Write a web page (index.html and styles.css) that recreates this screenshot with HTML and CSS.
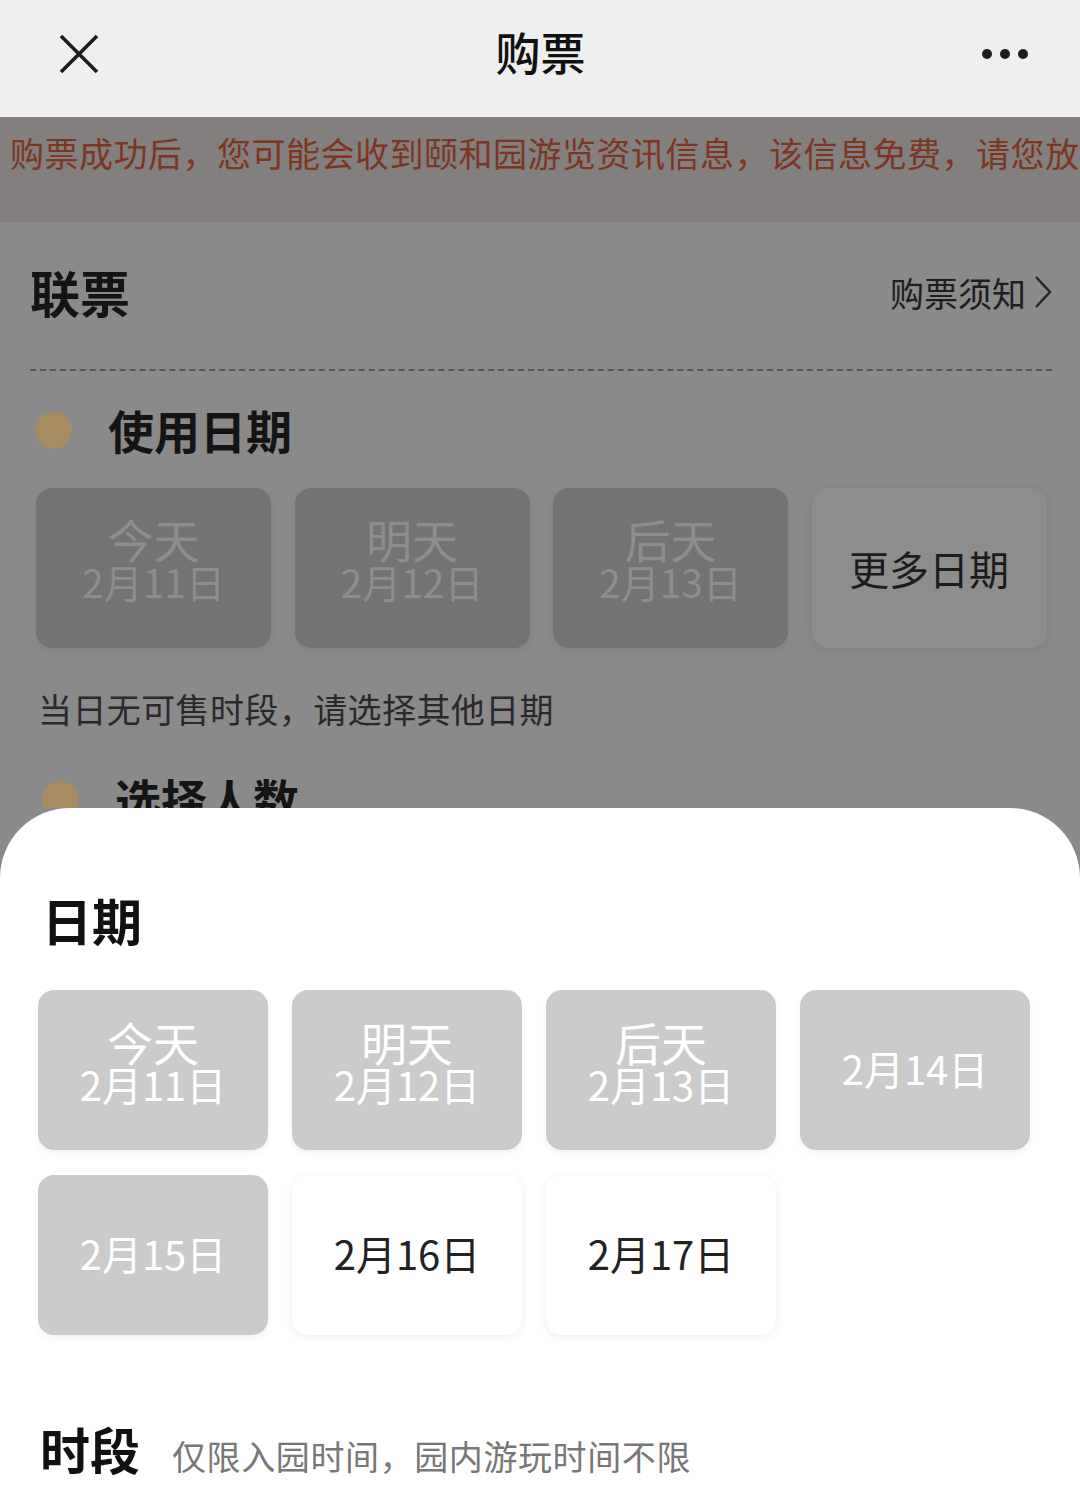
FILE: index.html
```html
<!DOCTYPE html>
<html lang="zh-CN">
<head>
    <meta charset="UTF-8">
    <meta name="viewport" content="width=device-width, initial-scale=1.0">
    <title>购票</title>
    <link rel="stylesheet" href="styles.css">
</head>
<body>

<!-- barra superior -->
<div class="navbar">
    <svg class="close" width="40" height="40" viewBox="0 0 40 40">
        <path d="M2 2 L38 38 M38 2 L2 38" stroke="#1c1c1c" stroke-width="3.6" fill="none"/>
    </svg>
    <div class="nav-title">购票</div>
    <div class="more"><i></i><i></i><i></i></div>
</div>

<!-- pagina escurecida atras do painel -->
<div class="page">
    <div class="notice">购票成功后，您可能会收到颐和园游览资讯信息，该信息免费，请您放心查收。</div>

    <div class="card">
        <div class="card-head">
            <h1>联票</h1>
            <a class="rules">购票须知
                <svg width="18" height="34" viewBox="0 0 18 34">
                    <path d="M2 2 L16 17 L2 32" stroke="#262626" stroke-width="2.4" fill="none"/>
                </svg>
            </a>
        </div>
        <div class="dashed"></div>

        <div class="section-title"><span class="dot"></span>使用日期</div>
        <div class="date-row">
            <div class="day off"><span class="big">今天</span><span>2月11日</span></div>
            <div class="day off"><span class="big">明天</span><span>2月12日</span></div>
            <div class="day off"><span class="big">后天</span><span>2月13日</span></div>
            <div class="day more-days">更多日期</div>
        </div>
        <p class="hint">当日无可售时段，请选择其他日期</p>

        <div class="section-title second"><span class="dot"></span>选择人数</div>
    </div>
</div>

<!-- painel de datas -->
<div class="sheet">
    <h2 class="sheet-title">日期</h2>
    <div class="date-grid">
        <div class="date off"><span class="big">今天</span><span>2月11日</span></div>
        <div class="date off"><span class="big">明天</span><span>2月12日</span></div>
        <div class="date off"><span class="big">后天</span><span>2月13日</span></div>
        <div class="date off"><span>2月14日</span></div>
        <div class="date off"><span>2月15日</span></div>
        <div class="date"><span>2月16日</span></div>
        <div class="date"><span>2月17日</span></div>
    </div>

    <div class="period">
        <h2 class="sheet-title">时段</h2>
        <span class="period-sub">仅限入园时间，园内游玩时间不限</span>
    </div>
</div>

</body>
</html>
```

FILE: styles.css
```css
body{
    margin: 0;
    padding: 0;
    width: 1080px;
    height: 1509px;
    overflow: hidden;
    background: #8a8a8a;
    font-family: "Noto Sans CJK SC", "Noto Sans", sans-serif;
}

/* barra superior */
.navbar{
    height: 117px;
    background: #efefef;
    display: grid;
    grid-template-columns: 1fr auto 1fr;
    align-items: center;
    padding: 0 52px 10px 59px;
    box-sizing: border-box;
}
.close{
    display: block;
}
.nav-title{
    font-size: 45px;
    font-weight: 500;
    color: #111;
    line-height: 60px;
    margin: 0 6px 4px 0;
}
.more{
    display: flex;
    gap: 8px;
    justify-self: end;
}
.more i{
    width: 10px;
    height: 10px;
    border-radius: 50%;
    background: #1c1c1c;
}

/* pagina escurecida */
.page{
    height: 691px;
    overflow: hidden;
}
.notice{
    height: 105px;
    box-sizing: border-box;
    padding: 11px 0 0 10px;
    background: #827f7e;
    color: #7e3622;
    font-size: 34px;
    line-height: 50px;
    letter-spacing: 0.5px;
    white-space: nowrap;
    overflow: hidden;
}
.card{
    padding: 0 28px 0 30px;
}
.card-head{
    display: flex;
    justify-content: space-between;
    align-items: center;
    padding-top: 34px;
    height: 70px;
}
.card-head h1{
    margin: 0;
    font-size: 50px;
    font-weight: 700;
    color: #141414;
    line-height: 70px;
}
.rules{
    display: flex;
    align-items: center;
    gap: 8px;
    font-size: 34px;
    color: #1e1e1e;
    margin-top: 2px;
}
.dashed{
    margin-top: 43px;
    height: 0;
    border-top: 2px dashed #5e5648;
}
.section-title{
    display: flex;
    align-items: center;
    margin-top: 28px;
    height: 60px;
    font-size: 46px;
    font-weight: 700;
    color: #141414;
}
.dot{
    width: 37px;
    height: 37px;
    border-radius: 50%;
    background: #a88b60;
    margin: 3px 36px 0 5px;
}
.section-title.second{
    margin-top: 34px;
    padding-left: 7px;
}

.date-row{
    display: grid;
    grid-template-columns: repeat(4, 235px);
    column-gap: 23.5px;
    margin: 29px 0 0 6px;
}
.day{
    height: 160px;
    border-radius: 16px;
    display: flex;
    flex-direction: column;
    align-items: center;
    justify-content: center;
    font-size: 39px;
    line-height: 40px;
    box-sizing: border-box;
}
.day.off{
    background: #737373;
    color: #8d8d8d;
    padding-bottom: 20px;
    box-shadow: 0 3px 6px rgba(0,0,0,0.05);
}
.day .big, .date .big{
    font-size: 46px;
    line-height: 46px;
}
.more-days{
    background: #8d8d8d;
    color: #1c1c1c;
    font-size: 40px;
    box-shadow: 0 2px 8px rgba(0,0,0,0.08);
}
.hint{
    margin: 36px 0 0 8px;
    font-size: 34px;
    line-height: 50px;
    letter-spacing: 0.4px;
    color: #2b282c;
}

/* painel de datas */
.sheet{
    height: 701px;
    background: #fff;
    border-radius: 70px 70px 0 0;
    padding-top: 76px;
    box-sizing: border-box;
}
.sheet-title{
    margin: 0 0 0 42px;
    font-size: 50px;
    font-weight: 700;
    line-height: 70px;
    color: #111;
}
.date-grid{
    display: grid;
    grid-template-columns: repeat(4, 230px);
    column-gap: 24px;
    row-gap: 25px;
    margin: 36px 0 0 38px;
}
.date{
    height: 160px;
    border-radius: 16px;
    display: flex;
    flex-direction: column;
    align-items: center;
    justify-content: center;
    font-size: 40px;
    line-height: 40px;
    color: #222;
    background: #fff;
    box-sizing: border-box;
    padding-bottom: 4px;
    box-shadow: 0 2px 9px rgba(0,0,0,0.07);
}
.date.off{
    background: #cbcbcb;
    color: #fff;
    box-shadow: 0 3px 6px rgba(0,0,0,0.05);
}
.date .big + span{
    margin-bottom: 14px;
}
.period{
    display: flex;
    align-items: baseline;
    margin-top: 78px;
}
.period .sheet-title{
    margin-left: 40px;
}
.period-sub{
    margin-left: 32px;
    font-size: 34px;
    letter-spacing: 0.6px;
    color: #777;
}
```
